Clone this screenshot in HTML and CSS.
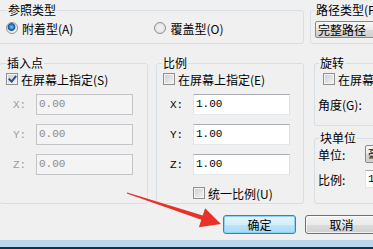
FILE: index.html
```html
<!DOCTYPE html>
<html lang="zh-CN">
<head>
  <meta charset="UTF-8" />
  <title>附着外部参照</title>
  <link rel="stylesheet" href="styles.css">
</head>
<body>
  <div class="dialog">

    <div class="row-top">
      <fieldset class="group group-ref">
        <legend>参照类型</legend>
        <div class="radio-row">
          <label class="radio-label"><span class="radio checked"></span>附着型(A)</label>
          <label class="radio-label radio-overlay"><span class="radio"></span>覆盖型(O)</label>
        </div>
      </fieldset>
      <fieldset class="group group-path">
        <legend>路径类型(P)</legend>
        <div class="combo">完整路径</div>
      </fieldset>
    </div>

    <div class="row-main">
      <fieldset class="group group-insert">
        <legend>插入点</legend>
        <label class="check-label"><span class="check checked"></span>在屏幕上指定(S)</label>
        <div class="coords disabled">
          <div class="coord-row"><span class="axis">X:</span><span class="field">0.00</span></div>
          <div class="coord-row"><span class="axis">Y:</span><span class="field">0.00</span></div>
          <div class="coord-row"><span class="axis">Z:</span><span class="field">0.00</span></div>
        </div>
      </fieldset>

      <fieldset class="group group-scale">
        <legend>比例</legend>
        <label class="check-label"><span class="check"></span>在屏幕上指定(E)</label>
        <div class="coords">
          <div class="coord-row"><span class="axis">X:</span><span class="field">1.00</span></div>
          <div class="coord-row"><span class="axis">Y:</span><span class="field">1.00</span></div>
          <div class="coord-row"><span class="axis">Z:</span><span class="field">1.00</span></div>
        </div>
        <label class="check-label uniform"><span class="check"></span>统一比例(U)</label>
      </fieldset>

      <div class="side-col">
        <fieldset class="group group-rotate">
          <legend>旋转</legend>
          <label class="check-label"><span class="check"></span>在屏幕上指定(R)</label>
          <div class="side-row angle-row"><span class="side-label">角度(G):</span></div>
        </fieldset>
        <fieldset class="group group-unit">
          <legend>块单位</legend>
          <div class="side-row"><span class="side-label">单位:</span><span class="combo small">毫米</span></div>
          <div class="side-row"><span class="side-label">比例:</span><span class="field small">1.0000</span></div>
        </fieldset>
      </div>
    </div>

    <div class="buttons">
      <button class="btn default">确定</button>
      <button class="btn">取消</button>
    </div>

    <div class="taskbar"></div>

    <!-- 红色箭头标注 -->
    <svg class="arrow" width="373" height="249" viewBox="0 0 373 249">
      <polygon points="127.2,192.4 202.7,215.6 205.1,208.2 221,224 198.9,227.2 201.3,219.8 126.8,193.6" fill="#e8312a" />
    </svg>
  </div>
</body>
</html>
```

FILE: styles.css
```css
body {
  margin: 0;
  width: 373px;
  height: 249px;
  overflow: hidden;
  background: #f0f0f0;
  font-family: "Noto Sans CJK SC", "Liberation Sans", sans-serif;
  font-size: 12px;
  color: #000;
}

.dialog {
  position: relative;
  width: 440px;
  padding-top: 3px;
}

/* 分组框 */
.group {
  box-sizing: border-box;
  margin: 0;
  padding: 0;
  min-width: 0;
  border: 1px solid #d5dfe5;
  border-radius: 3px;
}

.group legend {
  padding: 0 1px;
  line-height: 14px;
  font-size: 12px;
}

.row-top {
  display: flex;
  gap: 6px;
  margin-left: -6px;
}

.group-ref {
  width: 310px;
  height: 41px;
}
.group-ref legend { margin-left: 12px; }

.group-path {
  width: 130px;
  height: 41px;
  padding-left: 4px;
}
.group-path legend { margin-left: 0; }

.radio-row {
  display: flex;
  padding: 4px 0 0 11px;
}

.radio-label {
  display: flex;
  align-items: center;
  gap: 4px;
  height: 14px;
}

.radio-overlay {
  margin-left: 81px;
}

.radio {
  display: inline-block;
  box-sizing: border-box;
  width: 12px;
  height: 12px;
  border-radius: 50%;
  border: 1px solid #8e8f8f;
  background: radial-gradient(circle at 50% 50%, #f6f6f6 0, #e1e3e6 5px);
}

.radio.checked {
  background: radial-gradient(circle at 45% 40%, #8fd0f7 0, #2b83d3 2px, #14539c 3.5px, #d8dadd 4.2px, #f2f2f2 5px);
}

.combo {
  box-sizing: border-box;
  margin-top: 4px;
  height: 17px;
  width: 120px;
  padding-left: 2px;
  line-height: 15px;
  border: 1px solid #8a8a8a;
  border-radius: 2px;
  background: linear-gradient(#f6f6f6, #e9e9e9 50%, #dadada 51%, #cfcfcf);
}

/* 第二行 */
.row-main {
  display: flex;
  margin-top: 12px;
  margin-left: -1px;
  height: 148px;
}

.group-insert {
  width: 149px;
  height: 148px;
  padding-left: 6px;
}
.group-insert legend { margin-left: 0; }

.group-scale {
  width: 148px;
  height: 148px;
  margin-left: 8px;
  padding-left: 6px;
}
.group-scale legend { margin-left: -1px; }

.check-label {
  display: flex;
  align-items: center;
  gap: 3px;
  height: 14px;
  margin-top: 2px;
  white-space: nowrap;
}

.check {
  position: relative;
  display: inline-block;
  box-sizing: border-box;
  width: 12px;
  height: 12px;
  border: 1px solid #8e8f8f;
  background: linear-gradient(135deg, #c9cdd3, #f4f5f6);
  box-shadow: inset 0 0 0 1px #f3f3f3;
}

.check.checked::after {
  content: "";
  position: absolute;
  left: 3px;
  top: 0px;
  width: 3px;
  height: 6px;
  border: solid #2f4d8f;
  border-width: 0 2px 2px 0;
  transform: rotate(40deg);
}

.coords {
  display: flex;
  flex-direction: column;
  gap: 9px;
  margin-top: 8px;
}

.coord-row {
  display: flex;
  align-items: center;
}

.axis {
  width: 23px;
  padding-left: 7px;
  font-family: "Liberation Mono", "DejaVu Sans Mono", monospace;
  font-size: 11px;
}

.field {
  box-sizing: border-box;
  width: 97px;
  height: 21px;
  padding-left: 2px;
  line-height: 19px;
  font-family: "Liberation Mono", "DejaVu Sans Mono", monospace;
  font-size: 11px;
  border: 1px solid;
  border-color: #abadb3 #dbdfe6 #e3e9ef #e2e3ea;
  background: #fff;
}

.disabled .axis { color: #9c9c9c; }
.disabled .field {
  color: #8c8c8c;
  background: #f4f4f4;
  border-color: #c2c4c7;
}

.uniform {
  margin-top: 11px;
  padding-left: 30px;
}

/* 右侧列 */
.side-col {
  display: flex;
  flex-direction: column;
  gap: 5px;
  margin-left: 10px;
}

.group-rotate,
.group-unit {
  width: 120px;
  padding-left: 8px;
}
.group-rotate { height: 70px; }
.group-unit { height: 73px; }
.group-rotate legend,
.group-unit legend { margin-left: -4px; }

.side-row {
  display: flex;
  align-items: center;
  gap: 0;
  margin-left: -5px;
}

.angle-row {
  margin-top: 10px;
  height: 16px;
}

.side-label {
  width: 47px;
}

.group-unit .side-row:first-child {
  margin-top: 1px;
  height: 18px;
}
.group-unit .side-row + .side-row {
  margin-top: 7px;
  height: 18px;
}

.combo.small {
  margin-top: 0;
  width: 60px;
  height: 18px;
  line-height: 16px;
}

.field.small {
  width: 60px;
  height: 18px;
  line-height: 16px;
}

/* 按钮 */
.buttons {
  display: flex;
  gap: 9px;
  margin-top: 11px;
  padding-left: 223px;
}

.btn {
  box-sizing: border-box;
  width: 73px;
  height: 19px;
  padding: 0;
  font-family: "Noto Sans CJK SC", sans-serif;
  font-size: 12px;
  line-height: 17px;
  color: #000;
  border: 1px solid #707070;
  border-radius: 3px;
  background: linear-gradient(#f2f2f2, #ebebeb 50%, #dddddd 51%, #cfcfcf);
  box-shadow: inset 0 0 0 1px rgba(255,255,255,0.7);
}

.btn.default {
  border-color: #3c7fb1;
  background: linear-gradient(#e5f4fc, #d4edfb 50%, #bde5fb 51%, #a7d9f5);
  box-shadow: inset 0 0 0 1px #8ed2f3;
}

.taskbar {
  margin-top: 6px;
  height: 7px;
  background: #bad5ec;
  border-bottom: 3px solid #11304a;
}

.arrow {
  position: absolute;
  top: 0;
  left: 0;
  pointer-events: none;
}
```
